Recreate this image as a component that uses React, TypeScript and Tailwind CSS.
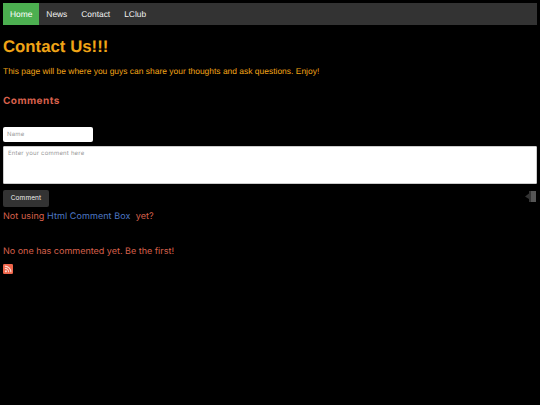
const sans = "font-['Liberation_Sans',Arial,sans-serif]"
const wide = "font-['Inter',sans-serif]"

function RssIcon() {
  return (
    <svg width="10" height="10" viewBox="0 0 24 24" className="block">
      <rect width="24" height="24" rx="3" fill="#f0654a" />
      <circle cx="7" cy="17.500" r="2.600" fill="#fbd9d0" />
      <path d="M4.500 10.500a9 9 0 0 1 9 9M4.500 5a14.500 14.500 0 0 1 14.500 14.500" fill="none" stroke="#fbd9d0" strokeWidth="2.600" />
    </svg>
  )
}

function ResizeTab() {
  return (
    <svg width="12" height="12" viewBox="0 0 12 12" className="block">
      <path d="M0 6.500 4 3.500V9Z" fill="#333" />
      <rect x="4" y="1" width="7" height="11" fill="#555" />
      <rect x="4" y="1" width="2" height="11" fill="#333" />
    </svg>
  )
}

export default function App() {
  return (
    <div className={`${sans} min-h-[405px] bg-black p-[3px] text-[#f0a416] [text-rendering:geometricPrecision]`}>
      <nav className="flex h-[22px] items-stretch bg-[#333] text-[8.400px] text-[#f2f2f2]">
        <a className="flex items-center bg-[#4caf50] px-[7px] text-white">Home</a>
        <a className="flex items-center px-[7px]">News</a>
        <a className="flex items-center px-[7px]">Contact</a>
        <a className="flex items-center px-[7px]">LClub</a>
      </nav>

      <h1 className="mt-[10px] text-[16.800px] font-bold leading-[24px]">Contact Us!!!</h1>
      <p className="mt-[6px] text-[8.460px] leading-[12px]">
        This page will be where you guys can share your thoughts and ask questions. Enjoy!
      </p>

      <div className={`${wide} text-[#d8604c]`}>
        <h2 className="mt-[17px] text-[10px] font-bold leading-[14px] tracking-[0.45px]">Comments</h2>

        <div className="mt-[19px] flex h-[15px] w-[90px] items-center rounded-[2px] bg-white px-1 text-[6px] tracking-[0.2px] text-[#999]">
          Name
        </div>
        <div className="mt-[4px] h-[38px] rounded-[1px] border border-[#ccc] bg-white px-1 py-[3px] text-[6px] leading-[8px] tracking-[0.2px] text-[#999]">
          Enter your comment here
        </div>

        <div className="mt-[6px] flex items-start justify-between">
          <button className="flex h-[17px] w-[46px] items-center justify-center rounded-[2px] bg-[#333] text-[6.500px] tracking-[0.1px] text-[#eee]">
            Comment
          </button>
          <ResizeTab />
        </div>

        <p className="mt-[4px] text-[9px] leading-[12px] tracking-[0.08px]">
          Not using <span className="text-[#4d78c4]">Html Comment Box</span>&nbsp; yet?
        </p>
        <p className="mt-[23px] text-[9px] leading-[12px]">No one has commented yet. Be the first!</p>
        <div className="mt-[6px]">
          <RssIcon />
        </div>
      </div>
    </div>
  )
}
